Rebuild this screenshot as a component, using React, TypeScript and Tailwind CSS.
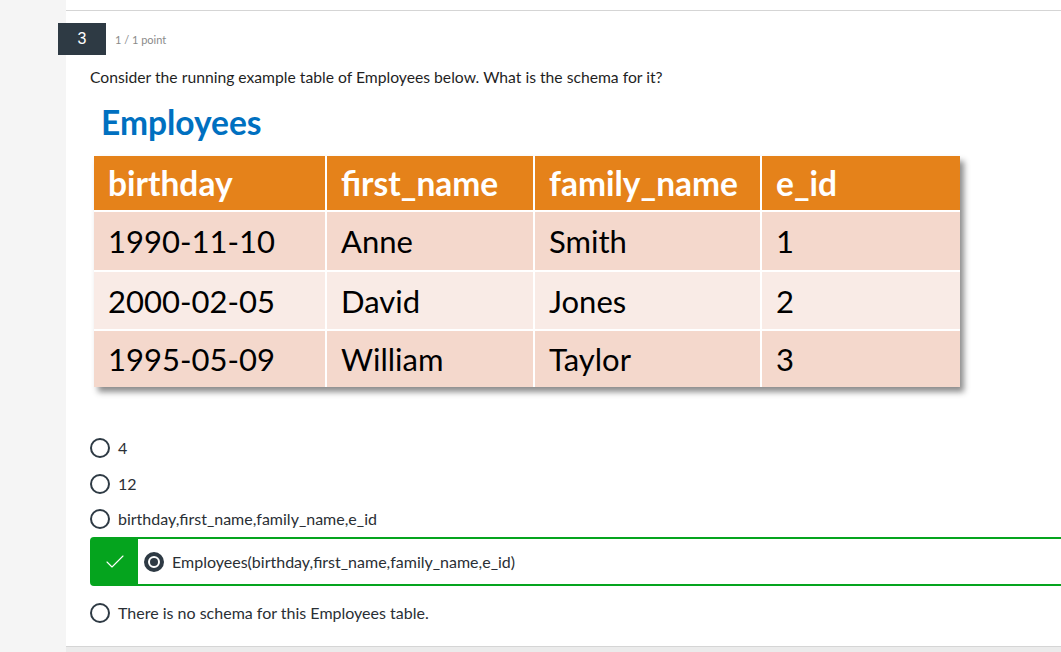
import { Check } from 'lucide-react';

const rows = [
    { birthday: '1990-11-10', first: 'Anne', family: 'Smith', id: '1', bg: 'bg-[#f4d8cc]', h: 'h-[58px]' },
    { birthday: '2000-02-05', first: 'David', family: 'Jones', id: '2', bg: 'bg-[#f9ebe6]', h: 'h-[57px]' },
    { birthday: '1995-05-09', first: 'William', family: 'Taylor', id: '3', bg: 'bg-[#f4d8cc]', h: 'h-[56px]' },
];

function Radio({ checked = false }: { checked?: boolean }) {
    if (checked) {
        return (
            <span className="w-[20px] h-[20px] rounded-full border-[4px] border-[#2e3a44] flex items-center justify-center shrink-0">
                <span className="w-[8px] h-[8px] rounded-full bg-[#2e3a44]" />
            </span>
        );
    }
    return <span className="w-[20px] h-[20px] rounded-full border-2 border-[#2e3a44] shrink-0" />;
}

function EmployeesTable() {
    const cell = 'pl-[14px] flex items-center leading-[38px]';
    return (
        <div className="w-[866px] flex flex-col gap-[2px] bg-white shadow-[4px_5px_6px_rgba(0,0,0,0.45)]">
            <div className="grid grid-cols-[231px_206px_225px_198px] gap-[2px] h-[54px] font-bold text-white text-[33.5px]">
                <div className={`${cell} bg-[#e5821a]`}>birthday</div>
                <div className={`${cell} bg-[#e5821a]`}>first_name</div>
                <div className={`${cell} bg-[#e5821a]`}>family_name</div>
                <div className={`${cell} bg-[#e5821a]`}>e_id</div>
            </div>
            {rows.map((r) => (
                <div key={r.id} className={`grid grid-cols-[231px_206px_225px_198px] gap-[2px] ${r.h} text-black text-[31px]`}>
                    <div className={`${cell} ${r.bg}`}>{r.birthday}</div>
                    <div className={`${cell} ${r.bg}`}>{r.first}</div>
                    <div className={`${cell} ${r.bg}`}>{r.family}</div>
                    <div className={`${cell} ${r.bg}`}>{r.id}</div>
                </div>
            ))}
        </div>
    );
}

export default function App() {
    return (
        <div className="w-[1061px] h-[652px] overflow-hidden flex bg-[#f5f5f5] font-['Lato',sans-serif]">
            <div className="w-[66px] shrink-0" />
            <div className="flex-1 flex flex-col min-w-0">
                <div className="h-[10px] bg-white" />
                <div className="h-[637px] bg-white border-t border-b border-[#d5d5d5] pt-[12px] pl-[24px] flex flex-col">
                    <div className="flex items-center -ml-[32px]">
                        <div className="w-[48px] h-[32px] bg-[#2e3a44] text-white flex items-center justify-center text-[16px] font-['Liberation_Sans',sans-serif]">
                            3
                        </div>
                        <span className="ml-[9px] mt-[2px] text-[11px] text-[#8a8a8a]">1 / 1 point</span>
                    </div>

                    <p className="mt-[12px] text-[15.7px] leading-[20px] text-[#1f1f1f]">
                        Consider the running example table of Employees below. What is the schema for it?
                    </p>

                    <div className="ml-[4px] mt-[16px]">
                        <h2 className="pl-[7px] text-[33.5px] leading-[38px] font-bold text-[#0070c0]">Employees</h2>
                        <div className="mt-[15px]">
                            <EmployeesTable />
                        </div>
                    </div>

                    <div className="mt-[51px] flex flex-col text-[16px] text-[#2a2f35]">
                        <label className="flex items-center gap-[8px] h-[20px]">
                            <Radio />
                            <span>4</span>
                        </label>
                        <label className="flex items-center gap-[8px] h-[20px] mt-[16px]">
                            <Radio />
                            <span>12</span>
                        </label>
                        <label className="flex items-center gap-[8px] h-[20px] mt-[15px]">
                            <Radio />
                            <span>birthday,first_name,family_name,e_id</span>
                        </label>
                        <div className="mt-[8px] h-[49px] w-[1000px] flex items-stretch border-2 border-[#05a41e] rounded-l-[4px]">
                            <div className="w-[46px] bg-[#05a41e] flex items-center justify-center">
                                <Check className="w-[24px] h-[24px] text-white" strokeWidth={1.1} />
                            </div>
                            <div className="flex items-center gap-[8px] pl-[6px]">
                                <Radio checked />
                                <span>Employees(birthday,first_name,family_name,e_id)</span>
                            </div>
                        </div>
                        <label className="flex items-center gap-[8px] h-[20px] mt-[17px]">
                            <Radio />
                            <span>There is no schema for this Employees table.</span>
                        </label>
                    </div>
                </div>
                <div className="flex-1 bg-[#ebebeb]" />
            </div>
        </div>
    );
}
